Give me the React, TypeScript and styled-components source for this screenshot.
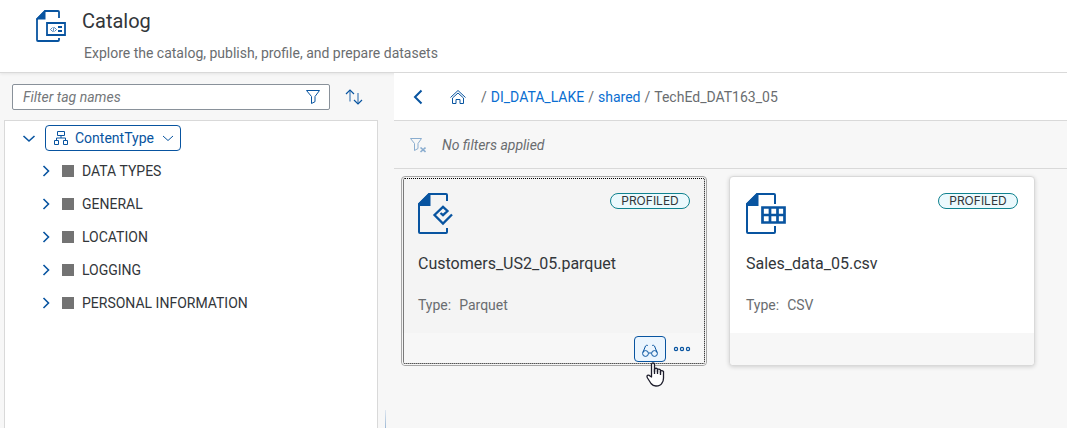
import React from "react";
import styled, { createGlobalStyle, css } from "styled-components";

const blue = "#0854a0";
const text = "#32363a";
const muted = "#6a6d70";
const line = "#d9d9d9";

const GlobalStyle = createGlobalStyle`
  *, *::before, *::after { box-sizing: border-box; }
  body {
    margin: 0;
    background: #f7f7f7;
    color: ${text};
    font-family: Roboto, "Liberation Sans", sans-serif;
    font-size: 14px;
    line-height: 20px;
  }
`;

const Page = styled.div`
  display: flex;
  flex-direction: column;
  min-height: 100vh;
  overflow: hidden;
`;

const Header = styled.header`
  display: flex;
  align-items: flex-start;
  gap: 16px;
  height: 73px;
  padding: 10px 36px 0;
  background: #fff;
  border-bottom: 1px solid ${line};
  box-shadow: 0 1px 3px rgba(0, 0, 0, 0.08);
`;

const Title = styled.h1`
  margin: 0;
  font-size: 20px;
  line-height: 22px;
  font-weight: 400;
`;

const Subtitle = styled.p`
  margin: 11px 0 0 2px;
  color: ${muted};
`;

const Body = styled.div`
  display: flex;
  flex: 1;
`;

const Sidebar = styled.aside`
  display: flex;
  flex-direction: column;
  flex: 0 0 378px;
  padding-left: 4px;
`;

const FilterBar = styled.form`
  display: flex;
  align-items: center;
  gap: 8px;
  height: 47px;
  padding: 1px 8px 0;
`;

const SearchField = styled.div`
  display: flex;
  align-items: center;
  flex: 1;
  height: 26px;
  background: #fff;
  border: 1px solid #89919a;
  border-radius: 2px;
`;

const SearchInput = styled.input`
  flex: 1;
  min-width: 0;
  padding: 0 10px;
  border: 0;
  outline: 0;
  background: none;
  font: inherit;
  &::placeholder {
    color: #74777a;
    font-style: italic;
    opacity: 1;
  }
`;

const IconButton = styled.button<{ $active?: boolean }>`
  display: flex;
  align-items: center;
  justify-content: center;
  position: relative;
  flex: none;
  width: 32px;
  height: 26px;
  padding: 0;
  color: ${blue};
  background: ${(p) => (p.$active ? "#ebf5fe" : "none")};
  border: 1px solid ${(p) => (p.$active ? blue : "transparent")};
  border-radius: 4px;
  &:disabled { opacity: 0.45; }
`;

const Tree = styled.ul`
  flex: 1;
  margin: 0;
  padding: 0;
  list-style: none;
  background: #fff;
  border: solid ${line};
  border-width: 1px 1px 0;
`;

const TreeChildren = styled.ul`
  margin: 0;
  padding: 0 0 0 16px;
  list-style: none;
`;

const TreeRow = styled.div`
  display: flex;
  align-items: center;
  height: 33px;
  padding-left: 16px;
`;

const Caret = styled.button`
  display: flex;
  align-items: center;
  justify-content: center;
  width: 16px;
  height: 16px;
  padding: 0;
  color: ${blue};
  background: none;
  border: 0;
`;

const RootTag = styled.button`
  display: flex;
  align-items: center;
  gap: 6px;
  height: 26px;
  margin-left: 8px;
  padding: 0 4px 0 7px;
  color: ${blue};
  background: #fff;
  border: 1px solid ${blue};
  border-radius: 4px;
  font: inherit;
`;

const Swatch = styled.span`
  width: 12px;
  height: 12px;
  margin: 0 8px 0 9px;
  background: #737373;
`;

const Gutter = styled.div`
  display: flex;
  flex: 0 0 16px;
  align-items: flex-end;
  padding-left: 7px;
`;

const Splitter = styled.div`
  width: 1px;
  height: 18px;
  background: linear-gradient(#dfe7f0, #9db9d6);
`;

const Main = styled.main`
  flex: 1;
  min-width: 0;
`;

const Bar = styled.div<{ $white?: boolean }>`
  display: flex;
  align-items: center;
  height: 48px;
  padding-left: 8px;
  background: ${(p) => (p.$white ? "#fff" : "#f7f7f7")};
  border-bottom: 1px solid ${line};
`;

const HomeLink = styled.a`
  display: flex;
  margin-left: 16px;
  color: ${blue};
`;

const Crumbs = styled.nav`
  display: flex;
  gap: 4px;
  padding-left: 15px;
  color: ${muted};
`;

const CrumbLink = styled.a`
  color: #0a6ed1;
  text-decoration: none;
`;

const FilterNote = styled.span`
  padding-left: 8px;
  color: ${muted};
  font-style: italic;
`;

const Cards = styled.div`
  display: grid;
  grid-template-columns: repeat(auto-fill, 306px);
  gap: 22px;
  padding: 7px;
`;

const Card = styled.article<{ $selected?: boolean }>`
  display: flex;
  flex-direction: column;
  height: 190px;
  background: ${(p) => (p.$selected ? "#f4f4f4" : "#fff")};
  border: 1px solid ${line};
  border-radius: 4px;
  box-shadow: 0 1px 4px rgba(0, 0, 0, 0.16);
  ${(p) =>
    p.$selected &&
    css`
      border-color: #a6a6a6;
      outline: 1px dotted #000;
      outline-offset: -3px;
      box-shadow: none;
    `}
`;

const CardBody = styled.div`
  flex: 1;
  padding: 16px 16px 0;
`;

const CardTop = styled.div`
  display: flex;
  align-items: flex-start;
  justify-content: space-between;
`;

const Badge = styled.span`
  width: 80px;
  height: 16px;
  color: ${text};
  background: #ebf9fd;
  border: 1px solid #0f828f;
  border-radius: 8px;
  font-family: Inter, Roboto, sans-serif;
  font-size: 12px;
  line-height: 14px;
  text-align: center;
`;

const CardName = styled.h2`
  margin: 20px 0 0;
  font-size: 16px;
  line-height: 20px;
  font-weight: 400;
`;

const CardType = styled.dl`
  display: flex;
  gap: 8px;
  margin: 21px 0 0;
  color: ${muted};
  dt, dd { margin: 0; }
`;

const CardFooter = styled.footer`
  display: flex;
  justify-content: flex-end;
  height: 32px;
  padding: 3px 8px 0;
  background: #f7f7f7;
  border-radius: 0 0 4px 4px;
`;

const Pointer = styled.svg`
  position: absolute;
  top: 25px;
  left: 11px;
`;

const Icon = ({ children, w = 1 }: { children: React.ReactNode; w?: number }) => (
  <svg width="16" height="16" viewBox="0 0 16 16" fill="none" stroke="currentColor" strokeWidth={w} aria-hidden="true">
    {children}
  </svg>
);

const FunnelIcon = () => (
  <Icon>
    <path d="M1.5 1.5h13L10 7.5v5.2L6.5 14.5v-7z" />
  </Icon>
);

const ClearFunnelIcon = () => (
  <Icon>
    <path d="M.5 1.5h11L8 6.5v5L4.5 13.5v-7z" />
    <path d="M10.5 10.5l5 4.5m0-4.5l-5 4.5" strokeWidth="1.6" />
  </Icon>
);

const SortIcon = () => (
  <svg width="18" height="16" viewBox="0 0 18 16" fill="none" stroke="currentColor" aria-hidden="true">
    <path d="M5 1v11.5M13 4v11" strokeWidth="1.5" opacity=".6" />
    <path d="M1 5l4-4 4 4M9 11l4 4 4-4" strokeWidth="1.2" />
  </svg>
);

const HomeIcon = () => (
  <Icon>
    <path d="M.5 8.5L8 1.5l7.5 7M2.5 9L8 4l5.5 5v5.5h-3.5v-4h-4v4h-3.5z" />
  </Icon>
);

const HierarchyIcon = () => (
  <Icon>
    <path d="M4.5 1.5h7v4h-7zM1.5 10.5h4v4h-4zM10.5 10.5h4v4h-4zM8 5.5V8M3.5 10.5V8h9v2.5" />
  </Icon>
);

const GlassesIcon = () => (
  <Icon>
    <circle cx="3.5" cy="12.5" r="2.9" />
    <circle cx="12.5" cy="12.5" r="2.9" />
    <path d="M6.5 12h3M.9 11.5L3.5 5q.6-1 2.3-.6M15.1 11.5L12.500 5q-.6-1-2.3-.6" />
  </Icon>
);

const DotsIcon = () => (
  <svg width="18" height="16" viewBox="0 0 18 16" fill="none" stroke="currentColor" strokeWidth="1.2" aria-hidden="true">
    <circle cx="3" cy="8" r="1.6" />
    <circle cx="9" cy="8" r="1.6" />
    <circle cx="15" cy="8" r="1.6" />
  </svg>
);

const ChevronDown = ({ thin }: { thin?: boolean }) => (
  <Icon w={thin ? 1 : 1.6}>
    <path d={thin ? "M3 6l5 4.5L13 6" : "M2.5 6l5.5 5 5.5-5"} />
  </Icon>
);

const ChevronRight = () => (
  <Icon w={1.6}>
    <path d="M6.5 3l5 5-5 5" />
  </Icon>
);

const BackIcon = () => (
  <Icon w={2}>
    <path d="M11.5 1.5L5 8l6.5 6.5" />
  </Icon>
);

const CatalogIcon = () => (
  <svg width="30" height="32" viewBox="0 0 30 32" fill="none" stroke={blue} strokeWidth="1.8" aria-hidden="true">
    <path d="M23 8V2q0-1-1-1H9L1 9v21q0 1 1 1h20q1 0 1-1v-2" />
    <path d="M9.5 0v9.5H0V9L9 0z" fill={blue} stroke="none" />
    <path d="M11 13h18v12H11z" />
    <path d="M22 17h4M22 21h4" />
    <path d="M16.5 17.5L14.5 19.5l2 2M18.5 17.5l2 2-2 2M18 17l-1 5" strokeWidth=".7" />
  </svg>
);

const ParquetIcon = () => (
  <svg width="36" height="41" viewBox="0 0 36 41" fill="none" stroke={blue} strokeWidth="2" aria-hidden="true">
    <path d="M29 8V2q0-1-1-1H11L1 11v28q0 1 1 1h26q1 0 1-1v-4" />
    <path d="M12.5 0v13H0V11L11 0z" fill={blue} stroke="none" />
    <path d="M34 21.500L25 30.500L16.500 22L25 13.800L29.500 18L25 22.200L22.500 20" strokeWidth="2.3" />
  </svg>
);

const TableFileIcon = () => (
  <svg width="40" height="41" viewBox="0 0 40 41" fill="none" stroke={blue} strokeWidth="2" aria-hidden="true">
    <path d="M29 11V2q0-1-1-1H11L1 11v28q0 1 1 1h26q1 0 1-1v-6" />
    <path d="M12.5 0v13H0V11L11 0z" fill={blue} stroke="none" />
    <path d="M16.500 14.500h22v15h-22zM16 22h23M24 14v16M31.500 14v16" strokeWidth="2.7" />
  </svg>
);

const HandPointer = () => (
  <Pointer width="19" height="25" viewBox="0 0 19 25" fill="#fff" stroke="#1d1d2b" strokeWidth="1.3" strokeLinejoin="round" aria-hidden="true">
    <path d="M5.5 15V2.5Q5.5 1 7 1t1.5 1.5V10V7Q10 5.5 11.500 7v3V7.500Q13 6.500 14.500 8v3V9q1.500-1 3 .5V16q0 3-1.500 5-1.500 3-6 3-3 0-5-2.500L1.500 16Q.5 14 1.500 13.300q1.500-.5 2.500.7z" />
    <path d="M8.500 7v5M11.500 8v4M14.500 9v4" fill="none" />
  </Pointer>
);

const tags = ["DATA TYPES", "GENERAL", "LOCATION", "LOGGING", "PERSONAL INFORMATION"];

const datasets = [
  { name: "Customers_US2_05.parquet", type: "Parquet", icon: <ParquetIcon />, selected: true },
  { name: "Sales_data_05.csv", type: "CSV", icon: <TableFileIcon />, selected: false },
];

export default function App() {
  return (
    <Page>
      <GlobalStyle />
      <Header>
        <CatalogIcon />
        <div>
          <Title>Catalog</Title>
          <Subtitle>Explore the catalog, publish, profile, and prepare datasets</Subtitle>
        </div>
      </Header>
      <Body>
        <Sidebar>
          <FilterBar onSubmit={(e) => e.preventDefault()}>
            <SearchField>
              <SearchInput type="text" placeholder="Filter tag names" aria-label="Filter tag names" />
              <IconButton type="submit" aria-label="Filter">
                <FunnelIcon />
              </IconButton>
            </SearchField>
            <IconButton type="button" aria-label="Sort">
              <SortIcon />
            </IconButton>
          </FilterBar>
          <Tree>
            <li>
              <TreeRow>
                <Caret aria-label="Collapse ContentType">
                  <ChevronDown />
                </Caret>
                <RootTag>
                  <HierarchyIcon />
                  ContentType
                  <ChevronDown thin />
                </RootTag>
              </TreeRow>
              <TreeChildren>
                {tags.map((tag) => (
                  <li key={tag}>
                    <TreeRow>
                      <Caret aria-label={`Expand ${tag}`}>
                        <ChevronRight />
                      </Caret>
                      <Swatch />
                      {tag}
                    </TreeRow>
                  </li>
                ))}
              </TreeChildren>
            </li>
          </Tree>
        </Sidebar>
        <Gutter>
          <Splitter />
        </Gutter>
        <Main>
          <Bar $white>
            <IconButton aria-label="Back">
              <BackIcon />
            </IconButton>
            <HomeLink href="#" aria-label="Home">
              <HomeIcon />
            </HomeLink>
            <Crumbs aria-label="Breadcrumb">
              <span>/</span>
              <CrumbLink href="#">DI_DATA_LAKE</CrumbLink>
              <span>/</span>
              <CrumbLink href="#">shared</CrumbLink>
              <span>/</span>
              <span>TechEd_DAT163_05</span>
            </Crumbs>
          </Bar>
          <Bar>
            <IconButton disabled aria-label="Clear filters">
              <ClearFunnelIcon />
            </IconButton>
            <FilterNote>No filters applied</FilterNote>
          </Bar>
          <Cards>
            {datasets.map((d) => (
              <Card key={d.name} $selected={d.selected}>
                <CardBody>
                  <CardTop>
                    {d.icon}
                    <Badge>PROFILED</Badge>
                  </CardTop>
                  <CardName>{d.name}</CardName>
                  <CardType>
                    <dt>Type:</dt>
                    <dd>{d.type}</dd>
                  </CardType>
                </CardBody>
                <CardFooter>
                  {d.selected && (
                    <>
                      <IconButton $active aria-label="View fact sheet">
                        <GlassesIcon />
                        <HandPointer />
                      </IconButton>
                      <IconButton aria-label="More actions">
                        <DotsIcon />
                      </IconButton>
                    </>
                  )}
                </CardFooter>
              </Card>
            ))}
          </Cards>
        </Main>
      </Body>
    </Page>
  );
}
